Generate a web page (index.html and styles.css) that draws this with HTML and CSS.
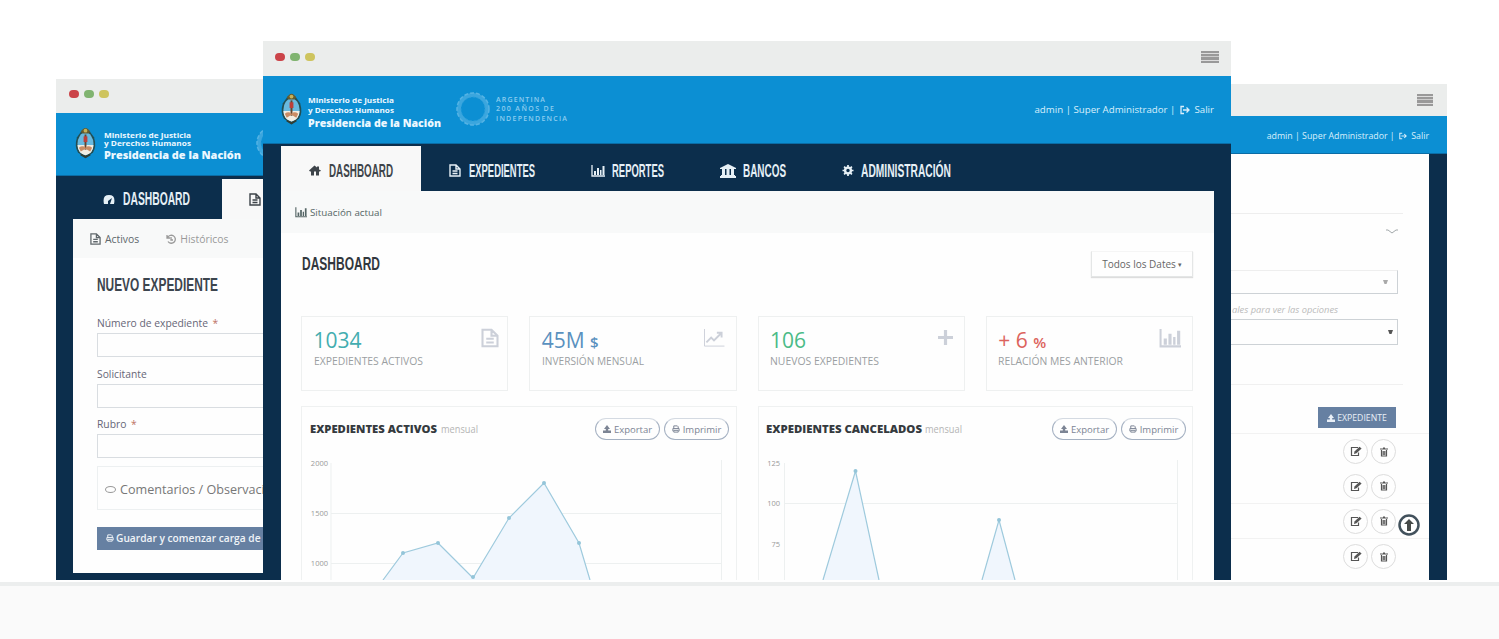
FILE: index.html
```html
<!DOCTYPE html>
<html lang="es">
<head>
<meta charset="utf-8">
<title>Dashboard</title>
<link rel="stylesheet" href="styles.css">
</head>
<body>
<svg class="defs" width="0" height="0">
  <symbol id="crest" viewBox="0 0 24 36">
    <path d="M3 12Q0 22 4 28L12 34L20 28Q24 22 21 12L16 5H8Z" fill="#234e52"/>
    <ellipse cx="12" cy="19" rx="8.500" ry="12" fill="#68b9df"/>
    <path d="M3.500 20H20.500Q20 29 12 31Q4 29 3.500 20Z" fill="#f1eee4"/>
    <path d="M12 9V25" stroke="#65452d" stroke-width="2"/>
    <path d="M10 11h4v6h-4z" fill="#bd3e38"/>
    <path d="M5 23Q9 20 12 23Q15 20 19 23L17 27L12 24L7 27Z" fill="#c98c65"/>
    <path d="M7 6Q12-2 17 6L15 8H9Z" fill="#655b2d"/><circle cx="12" cy="5" r="2" fill="#c5b25a"/>
    <path d="M7 30L12 33L17 30" fill="none" stroke="#303e35" stroke-width="2"/>
  </symbol>
  <symbol id="home" viewBox="0 0 12 10"><path d="M0 5L5.500 0L8 2V1h2v3l2 1l-1 1H10V10H7V6H5v4H2V6H1z" fill="currentColor"/></symbol>
  <symbol id="gauge" viewBox="0 0 12 9"><path d="M1 9Q-1 0 6 0Q13 0 11 9H7L9 3L5 6V9Z" fill="currentColor"/></symbol>
  <symbol id="doc" viewBox="0 0 12 13"><path d="M1 1H7L11 5V12H1ZM7 1V5H11M3.500 7H8.500M3.500 9.500H8.500" fill="none" stroke="currentColor" stroke-width="1.400"/></symbol>
  <symbol id="bars" viewBox="0 0 14 12"><path d="M1 0V11H14" fill="none" stroke="currentColor" stroke-width="1.300"/><path d="M3 6h2v4H3zM6 3h2v7H6zM9 5h1.500v5H9zM11.500 1h2v9h-2z" fill="currentColor"/></symbol>
  <symbol id="bank" viewBox="0 0 16 14"><path d="M0 4L8 0L16 4V5H0ZM2 5H5V11H2ZM6.500 5H9.500V11H6.500ZM11 5H14V11H11ZM1 11H15V12H16V14H0V12H1Z" fill="currentColor"/></symbol>
  <symbol id="gear" viewBox="0 0 14 14"><circle cx="7" cy="7" r="3.700" fill="none" stroke="currentColor" stroke-width="3"/><path d="M7 0V3M7 11V14M0 7H3M11 7H14M2 2L4 4M10 10L12 12M2 12L4 10M10 4L12 2" stroke="currentColor" stroke-width="2.200"/></symbol>
  <symbol id="line" viewBox="0 0 22 20"><path d="M1 0V18H22" fill="none" stroke="currentColor"/><path d="M3 14L8 9L11 12L18 5M14 4H19V9" fill="none" stroke="currentColor" stroke-width="2"/></symbol>
  <symbol id="plus" viewBox="0 0 16 16"><path d="M6.300 0H9.700V6.300H16V9.700H9.700V16H6.300V9.700H0V6.300H6.300Z" fill="currentColor"/></symbol>
  <symbol id="upload" viewBox="0 0 8 8"><path d="M4 0L7 4H5.200V5.500H8V8H0V5.500H2.800V4H1Z" fill="currentColor"/></symbol>
  <symbol id="print" viewBox="0 0 9 9"><path d="M2 4V1H6L7 2V4M1 7V4H8V7M2 6H7V8H2Z" fill="none" stroke="currentColor" stroke-width="1.100"/></symbol>
  <symbol id="undo" viewBox="0 0 10 10"><path d="M1 1V4H4M1.500 4A4 4 0 1 1 2 7.500M5 3V6H7" fill="none" stroke="currentColor" stroke-width="1.300"/></symbol>
  <symbol id="exit" viewBox="0 0 10 9"><path d="M4 1H1V8H4M3 4.500H9M6.500 2L9 4.500L6.500 7" fill="none" stroke="currentColor" stroke-width="1.300"/></symbol>
  <symbol id="edit" viewBox="0 0 12 11"><path d="M8 1.500H1.500V9.500H8.500V6.500" fill="none" stroke="currentColor" stroke-width="1.200"/><path d="M4 8L4.500 5.500L9.500 .800L11.600 2.500L6.500 7.300Z" fill="currentColor"/></symbol>
  <symbol id="trash" viewBox="0 0 8 10"><path d="M0 2H8M3 1H5M1.500 3V9H6.500V3M3.200 4V8M4.800 4V8" fill="none" stroke="currentColor" stroke-width="1.200"/></symbol>
  <symbol id="wreath" viewBox="0 0 36 38"><circle cx="18" cy="19" r="14" fill="none" stroke="#3ba6de" stroke-width="4"/><circle cx="18" cy="19" r="16" fill="none" stroke="#55b3e4" stroke-width="1.500" stroke-dasharray="4 2"/><circle cx="18" cy="19" r="12" fill="none" stroke="#2ca0dc" stroke-dasharray="2 2"/></symbol>
</svg>

<main class="stage">
  <section class="window window-left">
    <div class="titlebar"><i class="dot red"></i><i class="dot green"></i><i class="dot yellow"></i></div>
    <header class="header">
      <svg class="crest"><use href="#crest"/></svg>
      <svg class="brand" viewBox="0 0 137 30"><text y="8" class="brand-small" textLength="87" lengthAdjust="spacingAndGlyphs">Ministerio de Justicia</text><text y="16" class="brand-small" textLength="87" lengthAdjust="spacingAndGlyphs">y Derechos Humanos</text><text y="29" class="brand-big" textLength="137" lengthAdjust="spacingAndGlyphs">Presidencia de la Nación</text></svg>
      <svg class="wreath"><use href="#wreath"/></svg>
    </header>
    <nav class="nav">
      <div class="tab"><svg class="ico i12"><use href="#gauge"/></svg><svg class="cond" width="67" height="20"><text y="16" textLength="67" lengthAdjust="spacingAndGlyphs">DASHBOARD</text></svg></div>
      <div class="tab active"><svg class="ico i13"><use href="#doc"/></svg></div>
    </nav>
    <div class="panel">
      <div class="subbar"><span class="active-link"><svg class="ico i11"><use href="#doc"/></svg>Activos</span><span><svg class="ico i10"><use href="#undo"/></svg>Históricos</span></div>
      <form class="form">
        <h2><svg class="cond" width="121" height="20"><text y="16" textLength="121" lengthAdjust="spacingAndGlyphs">NUEVO EXPEDIENTE</text></svg></h2>
        <label>Número de expediente <b>*</b></label><div class="input"></div>
        <label>Solicitante</label><div class="input"></div>
        <label>Rubro <b>*</b></label><div class="input"></div>
        <div class="comments"><i class="bubble"></i>Comentarios / Observaciones</div>
        <div class="save"><svg class="ico i8"><use href="#print"/></svg>Guardar y comenzar carga de datos</div>
      </form>
    </div>
  </section>

  <section class="window window-right">
    <div class="titlebar"><i class="menu"></i></div>
    <header class="header"><div class="user">admin | Super Administrador | <svg class="ico i8"><use href="#exit"/></svg> Salir</div></header>
    <div class="panel">
      <div class="blank"></div>
      <div class="filters">
        <svg class="chevron" viewBox="0 0 12 6"><path d="M0 1L2 1L6 4L10 1L12 1" fill="none" stroke="#a2a8aa"/></svg>
        <div class="select"><i class="caret light"></i></div>
        <p class="hint">ales para ver las opciones</p>
        <div class="select second"><i class="caret"></i></div>
      </div>
      <div class="action"><span class="new"><svg class="ico i8"><use href="#upload"/></svg>EXPEDIENTE</span></div>
      <div class="record"><span><svg class="ico i12"><use href="#edit"/></svg></span><span><svg class="ico i10"><use href="#trash"/></svg></span></div>
      <div class="record"><span><svg class="ico i12"><use href="#edit"/></svg></span><span><svg class="ico i10"><use href="#trash"/></svg></span></div>
      <div class="record"><span><svg class="ico i12"><use href="#edit"/></svg></span><span><svg class="ico i10"><use href="#trash"/></svg></span></div>
      <div class="record"><span><svg class="ico i12"><use href="#edit"/></svg></span><span><svg class="ico i10"><use href="#trash"/></svg></span></div>
    </div>
    <svg class="to-top" viewBox="0 0 24 22"><circle cx="12" cy="11" r="9.500" fill="#fff" stroke="#42515c" stroke-width="2.500"/><path d="M12 5L17 10H14V17H10V10H7Z" fill="#464a49"/></svg>
  </section>

  <section class="window window-main">
    <div class="titlebar"><i class="dot red"></i><i class="dot green"></i><i class="dot yellow"></i><i class="menu"></i></div>
    <header class="header">
      <svg class="crest"><use href="#crest"/></svg>
      <svg class="brand" viewBox="0 0 133 34"><text y="8" class="brand-small" textLength="86" lengthAdjust="spacingAndGlyphs">Ministerio de Justicia</text><text y="18" class="brand-small" textLength="86" lengthAdjust="spacingAndGlyphs">y Derechos Humanos</text><text y="32" class="brand-big" textLength="133" lengthAdjust="spacingAndGlyphs">Presidencia de la Nación</text></svg>
      <svg class="wreath"><use href="#wreath"/></svg>
      <svg class="bicentenary" viewBox="0 0 72 28"><text y="7" textLength="49">ARGENTINA</text><text y="16" textLength="58">200 AÑOS DE</text><text y="26" textLength="71">INDEPENDENCIA</text></svg>
      <div class="user">admin | Super Administrador | <svg class="ico i10"><use href="#exit"/></svg> Salir</div>
    </header>
    <nav class="nav">
      <div class="tab active"><svg class="ico i12"><use href="#home"/></svg><svg class="cond" width="64" height="20"><text y="16" textLength="64" lengthAdjust="spacingAndGlyphs">DASHBOARD</text></svg></div>
      <div class="tab"><svg class="ico i13"><use href="#doc"/></svg><svg class="cond" width="66" height="20"><text y="16" textLength="66" lengthAdjust="spacingAndGlyphs">EXPEDIENTES</text></svg></div>
      <div class="tab"><svg class="ico i14"><use href="#bars"/></svg><svg class="cond" width="52" height="20"><text y="16" textLength="52" lengthAdjust="spacingAndGlyphs">REPORTES</text></svg></div>
      <div class="tab"><svg class="ico i15"><use href="#bank"/></svg><svg class="cond" width="43" height="20"><text y="16" textLength="43" lengthAdjust="spacingAndGlyphs">BANCOS</text></svg></div>
      <div class="tab"><svg class="ico i12"><use href="#gear"/></svg><svg class="cond" width="90" height="20"><text y="16" textLength="90" lengthAdjust="spacingAndGlyphs">ADMINISTRACIÓN</text></svg></div>
    </nav>
    <div class="panel">
      <div class="subbar"><svg class="ico i12"><use href="#bars"/></svg>Situación actual</div>
      <div class="heading"><svg class="cond" width="78" height="20"><text y="16" textLength="78" lengthAdjust="spacingAndGlyphs">DASHBOARD</text></svg><div class="dates">Todos los Dates <span>▾</span></div></div>
      <div class="stats">
        <article class="stat teal"><strong>1034</strong><svg class="label" width="109" height="14"><text y="11" textLength="109" lengthAdjust="spacingAndGlyphs">EXPEDIENTES ACTIVOS</text></svg><svg class="mark doc"><use href="#doc"/></svg></article>
        <article class="stat blue"><strong>45M <small>$</small></strong><svg class="label" width="102" height="14"><text y="11" textLength="102" lengthAdjust="spacingAndGlyphs">INVERSIÓN MENSUAL</text></svg><svg class="mark"><use href="#line"/></svg></article>
        <article class="stat green-text"><strong>106</strong><svg class="label" width="109" height="14"><text y="11" textLength="109" lengthAdjust="spacingAndGlyphs">NUEVOS EXPEDIENTES</text></svg><svg class="mark plus"><use href="#plus"/></svg></article>
        <article class="stat red-text"><strong>+ 6 <small>%</small></strong><svg class="label" width="125" height="14"><text y="11" textLength="125" lengthAdjust="spacingAndGlyphs">RELACIÓN MES ANTERIOR</text></svg><svg class="mark"><use href="#bars"/></svg></article>
      </div>
      <div class="charts">
        <article class="chart">
          <div class="chart-head"><svg class="chart-title" width="170" height="14"><text y="11" textLength="127" lengthAdjust="spacingAndGlyphs">EXPEDIENTES ACTIVOS</text><text x="131" y="11" class="period" textLength="37" lengthAdjust="spacingAndGlyphs">mensual</text></svg><div class="buttons"><span><svg class="ico i8"><use href="#upload"/></svg>Exportar</span><span><svg class="ico i8"><use href="#print"/></svg>Imprimir</span></div></div>
          <svg class="plot" viewBox="301 447 435 133">
            <path class="grid" d="M331 463V580M721.500 460V580M331 513.500H721M331 563.500H721"/>
            <path class="area" d="M383 580L403 553L438 543L473 578L509 518L544 483L579 543L590 580Z"/>
            <path class="curve" d="M383 580L403 553L438 543L473 578L509 518L544 483L579 543L590 580"/>
            <path class="points" d="M403 553h0M438 543h0M473 577h0M509 518h0M544 483h0M579 543h0"/>
            <text x="328" y="466">2000</text><text x="328" y="516">1500</text><text x="328" y="566">1000</text>
          </svg>
        </article>
        <article class="chart">
          <div class="chart-head"><svg class="chart-title" width="198" height="14"><text y="11" textLength="156" lengthAdjust="spacingAndGlyphs">EXPEDIENTES CANCELADOS</text><text x="159" y="11" class="period" textLength="37" lengthAdjust="spacingAndGlyphs">mensual</text></svg><div class="buttons"><span><svg class="ico i8"><use href="#upload"/></svg>Exportar</span><span><svg class="ico i8"><use href="#print"/></svg>Imprimir</span></div></div>
          <svg class="plot" viewBox="758 447 435 133">
            <path class="grid" d="M784.500 463V580M1177.500 460V580M785 503.500H1177"/>
            <path class="area" d="M823 580L855.500 471L879 580ZM982 580L999 520L1015 580Z"/>
            <path class="curve" d="M823 580L855.500 471L879 580M982 580L999 520L1015 580"/>
            <path class="points" d="M855.500 471h0M999 520h0"/>
            <text x="780" y="466">125</text><text x="780" y="506">100</text><text x="780" y="547">75</text>
          </svg>
        </article>
      </div>
    </div>
  </section>
</main>
<footer class="footer"></footer>
</body>
</html>
```

FILE: styles.css
```css
* { box-sizing: border-box; }
body { margin: 0; width: 1499px; height: 639px; overflow: hidden; background: #fff; color: #566; font-family: "Open Sans", sans-serif; font-size: 9px; }
h2, p { margin: 0; font-size: inherit; }
svg { display: block; flex: none; }
.defs { position: absolute; }
.stage { position: relative; height: 582px; }
.footer { height: 57px; background: #fafafa; border-top: 4px solid #eceeee; }

/* Browser windows overlap on the stage */
.window { position: absolute; overflow: hidden; display: flex; flex-direction: column; background: #0c2e4c; }
.window-left { left: 56px; top: 79px; width: 220px; height: 501px; }
.window-right { left: 1200px; top: 84px; width: 247px; height: 496px; }
.window-main { left: 263px; top: 41px; width: 968px; height: 539px; }
.titlebar { flex: none; display: flex; align-items: center; gap: 5px; background: #ebedec; }
.window-main .titlebar { height: 35px; padding: 0 12px 4px; }
.window-left .titlebar { height: 34px; padding: 0 13px 4px; }
.window-right .titlebar { height: 32px; padding: 0 14px; }
.dot { width: 10px; height: 8px; border-radius: 4px; }
.red { background: #cb4449; }
.green { background: #80b470; }
.yellow { background: #cec45e; }
.menu { margin-left: auto; width: 18px; height: 12px; border-top: 2px solid #999; border-bottom: 2px solid #999; background: linear-gradient(#ddd 0 1px, #999 1px 3px, #ccc 3px 4px, #999 4px 7px, #ddd 7px); }
.window-right .menu { width: 16px; }
.header { flex: none; display: flex; background: #0c8fd3; border-bottom: 1px solid #0b6ca5; color: #d9effc; }
.window-main .header { height: 68px; padding-left: 17px; }
.window-left .header { height: 63px; padding-left: 17px; }
.window-right .header { height: 38px; }
.crest { width: 23px; height: 36px; margin-top: 15px; }
.window-left .crest { height: 34px; width: 25px; margin-top: 13px; }
.brand { width: 133px; height: 34px; margin: 19px 0 0 5px; fill: #ecf8ff; font-weight: 700; overflow: visible; }
.window-left .brand { width: 137px; height: 30px; margin: 17px 0 0 6px; }
.brand-small { font-size: 7.500px; }
.brand-big { font-size: 10.500px; font-weight: 800; }
.wreath { width: 36px; height: 38px; margin: 14px 0 0 14px; }
.window-left .wreath { margin-top: 11px; }
.bicentenary { width: 72px; height: 28px; margin: 19px 0 0 5px; fill: #8dcdf0; font-size: 7px; font-weight: 600; }
.user { margin-left: auto; display: flex; align-items: center; gap: 2px; white-space: pre; }
.window-main .user { font-size: 9.700px; padding-right: 17px; }
.window-right .user { font-size: 8.800px; padding: 3px 18px 0 0; }
.nav { flex: none; display: flex; padding: 3px 0 0 18px; }
.window-main .nav { height: 47px; padding-top: 2px; }
.window-left .nav { height: 43px; }
.tab { flex: none; display: flex; align-items: center; gap: 8px; padding: 4px 28px 0; color: #e6f0f6; }
.window-left .tab { padding-left: 27px; padding-top: 0; }
.window-left .tab:first-child { width: 148px; padding: 0 0 0 29px; }
.window-main .tab:nth-child(n+3) { gap: 7px; }
.tab.active { background: #f8f8f8; color: #3e444a; }
.cond { overflow: visible; fill: currentColor; font: 700 17.500px "Liberation Sans", sans-serif; }
.ico { display: inline-block; }
.i8 { width: 8px; height: 8px; }
.i10 { width: 10px; height: 10px; }
.i11 { width: 11px; height: 12px; }
.i12 { width: 12px; height: 11px; }
.i13 { width: 12px; height: 13px; }
.i14 { width: 14px; height: 12px; }
.i15 { width: 16px; height: 14px; }
.panel { flex: 1; margin: 0 17px 0 18px; background: #fefefe; min-height: 0; }
.window-left .panel { margin: 0 0 7px 17px; }
.window-right .panel { margin: 0 18px 0 0; }
.subbar { display: flex; align-items: center; background: #f8f9f9; }
.window-main .subbar { height: 42px; padding-left: 14px; gap: 3px; font-size: 9.800px; }
.window-left .subbar { height: 39px; padding-left: 17px; gap: 27px; color: #999; font-size: 10.400px; }
.subbar span { display: flex; align-items: center; gap: 4px; }
.subbar .active-link { color: #60686c; }

/* New record form */
.form { padding: 17px 0 0 24px; color: #667; white-space: nowrap; }
.form h2 { color: #3c454e; height: 39px; }
.form label { display: block; height: 19px; line-height: 18px; font-size: 10.300px; }
.form label b { margin-left: 2px; color: #bd7264; font-weight: 400; }
.input { height: 24px; margin-bottom: 7.500px; border: 1px solid #d9dde1; }
.comments { display: flex; align-items: center; gap: 4px; height: 44px; margin-top: 4px; padding: 3px 0 0 7px; border: 1px solid #edf0f1; color: #777; font-size: 12.600px; }
.bubble { flex: none; width: 11px; height: 7px; border: 1px solid #999; border-radius: 50%; }
.save { display: flex; align-items: center; gap: 2px; height: 23px; margin-top: 17px; padding-left: 9px; background: #6680a2; color: #f0f4f8; font-size: 10.200px; font-weight: 600; }

/* Main dashboard */
.heading { display: flex; justify-content: space-between; height: 83px; padding: 21px 21px 0; color: #32373d; }
.dates { height: 26px; width: 102px; margin-top: -3px; display: flex; align-items: center; justify-content: center; gap: 2px; border: 1px solid #e4e6e6; border-top-color: #f5f5f5; box-shadow: 0 1px 1px #ddd; color: #666; font-size: 10px; }
.dates span { font-size: 7px; }
.stats { display: grid; grid-template-columns: repeat(4, 1fr); gap: 21px; padding: 0 21px 0 20px; }
.stat { position: relative; height: 75px; padding: 9px 11.500px; border: 1px solid #eef0f0; }
.stat strong { display: block; height: 28px; line-height: 29px; font-size: 21px; font-weight: 400; }
.stat small { font-size: 15px; font-weight: 600; }
.label { fill: #9b9fa2; font-size: 10px; overflow: visible; }
.teal { color: #43adb0; }
.blue { color: #5a91bf; }
.green-text { color: #4abb87; }
.red-text { color: #dc635c; }
.mark { position: absolute; right: 11px; top: 12px; width: 22px; height: 19px; color: #ccd0d9; }
.mark.doc { right: 8px; top: 11px; width: 18px; height: 20px; }
.mark.plus { width: 15px; height: 17px; }
.charts { display: grid; grid-template-columns: 436px 435px; gap: 21px; padding: 15px 21px 0 20px; }
.chart { height: 190px; border: 1px solid #eff1f1; }
.chart-head { display: flex; justify-content: space-between; height: 40px; padding: 11px 7px 0 8px; }
.chart + .chart .chart-head { padding-left: 7px; padding-right: 6px; }
.chart-title { margin-top: 4px; fill: #353a3e; font-size: 10px; font-weight: 800; }
.chart-title .period { fill: #b5b5b5; font-weight: 400; }
.buttons { display: flex; gap: 4px; }
.buttons span { display: flex; align-items: center; justify-content: center; gap: 3px; width: 65px; height: 22px; border: 1px solid #a5b1c2; border-top-color: #d4dae2; border-radius: 11px; color: #7c8494; font-size: 9.500px; }
.plot { width: 435px; height: 133px; margin-left: -1px; }
.plot text { fill: #999; font-size: 7.500px; text-anchor: end; }
.grid { fill: none; stroke: #edf0f0; }
.area { fill: #f0f6fd; }
.curve { fill: none; stroke: #9ecadd; stroke-width: 1.200; }
.points { fill: none; stroke: #94c5d9; stroke-width: 4; stroke-linecap: round; }

/* Records window */
.blank { height: 60px; margin-right: 26px; border-bottom: 1px solid #eee; }
.filters { height: 171px; margin-right: 26px; padding: 15px 5px 0 0; border-bottom: 1px solid #f0f0f0; }
.chevron { width: 12px; height: 6px; margin-left: auto; }
.select { display: flex; align-items: center; justify-content: flex-end; height: 24px; margin-top: 35px; padding-right: 9px; border: 1px solid #cdd2d6; border-top-color: #eee; }
.select.second { height: 26px; margin-top: 0; padding-right: 4px; border-top-color: #cdd2d6; }
.caret { width: 5px; height: 4px; background: #555; clip-path: polygon(0 0, 100% 0, 70% 100%, 30% 100%); }
.caret.light { background: #aaa; }
.hint { height: 25px; padding: 9px 0 0 32px; color: #bbb; font-size: 9.300px; font-style: italic; line-height: 14px; white-space: nowrap; }
.action { display: flex; justify-content: flex-end; height: 49px; padding: 22px 33px 0 0; border-bottom: 1px solid #f2f2f2; }
.new { display: flex; align-items: center; justify-content: center; gap: 2px; width: 78px; height: 21px; background: #6680a2; color: #e9eff7; font-size: 8.700px; }
.record { display: flex; justify-content: flex-end; align-items: center; gap: 3px; height: 35px; padding-right: 33px; color: #555; }
.record:nth-last-child(3), .record:nth-last-child(2) { border-bottom: 1px solid #f2f2f2; }
.record span { display: flex; align-items: center; justify-content: center; width: 25px; height: 25px; border: 1px solid #ddd; border-radius: 50%; }
.to-top { position: absolute; left: 197px; top: 430px; width: 24px; height: 22px; }
```
